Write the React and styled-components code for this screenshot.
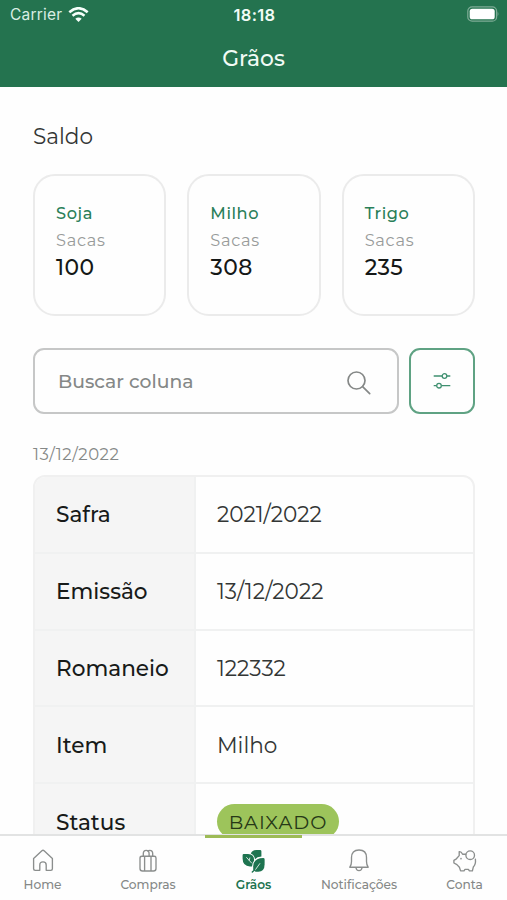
import React from "react";
import styled, { createGlobalStyle } from "styled-components";

const Global = createGlobalStyle`
  *, *::before, *::after { box-sizing: border-box; }
  html, body { margin: 0; padding: 0; background: #fff; overflow: hidden; }
  body { font-family: Montserrat, Inter, "Open Sans", sans-serif; color: #1c1f1e; }
`;

const Screen = styled.div`
  display: flex;
  flex-direction: column;
  width: 507px;
  height: 900px;
  overflow: hidden;
  background: #fefefe;
`;

const Header = styled.header`
  flex: none;
  height: 87px;
  background: #24734f;
  color: #f2fbf6;
`;

const StatusBar = styled.div`
  display: grid;
  grid-template-columns: 1fr auto 1fr;
  align-items: center;
  height: 29px;
  padding: 0 8px 0 10px;
  font-family: Inter, sans-serif;
  line-height: 20px;
`;

const Carrier = styled.div`
  display: flex;
  align-items: center;
  gap: 6px;
  padding-top: 1px;
  font-size: 15.5px;
  letter-spacing: 0.2px;
  color: #d9eee3;

  svg { margin-top: -1px; }
`;

const Clock = styled.div`
  font-size: 16.5px;
  font-weight: 600;
  letter-spacing: 0.3px;
`;

const Battery = styled.div`
  display: flex;
  justify-content: flex-end;
  margin-top: -1px;
`;

const Title = styled.h1`
  margin: 0;
  height: 58px;
  font-size: 21.8px;
  font-weight: 500;
  line-height: 59px;
  text-align: center;
`;

const Content = styled.main`
  flex: 1;
  min-height: 0;
  padding: 0 32px 0 33px;
  overflow: hidden;
`;

const Heading = styled.h2`
  margin: 36px 0 0;
  font-size: 21.6px;
  font-weight: 400;
  line-height: 27px;
  color: #333635;
`;

const Cards = styled.div`
  display: grid;
  grid-template-columns: repeat(3, 1fr);
  gap: 21px;
  margin-top: 24px;
`;

const Card = styled.section`
  height: 142px;
  padding: 24px 21px;
  border: 2px solid #ebebeb;
  border-radius: 22px;
`;

const CardName = styled.div`
  font-size: 16.2px;
  font-weight: 500;
  line-height: 26px;
  letter-spacing: 0.6px;
  color: #2a7f59;
`;

const CardUnit = styled.div`
  font-size: 16.2px;
  line-height: 28px;
  letter-spacing: 0.7px;
  color: #989b9a;
`;

const CardValue = styled.div`
  font-size: 21.8px;
  font-weight: 500;
  line-height: 26px;
  letter-spacing: 0.4px;
  color: #151817;
`;

const SearchRow = styled.div`
  display: flex;
  justify-content: space-between;
  margin-top: 32px;
`;

const SearchBox = styled.div`
  display: flex;
  align-items: center;
  justify-content: space-between;
  width: 366px;
  height: 66px;
  padding: 0 26px 0 23px;
  border: 2px solid #c6c7c7;
  border-radius: 11px;
  font-size: 18.8px;
  font-weight: 500;
  color: #858887;

  svg { margin-top: 4px; }
`;

const FilterButton = styled.button`
  display: flex;
  align-items: center;
  justify-content: center;
  width: 66px;
  height: 66px;
  padding: 0;
  border: 2px solid #5fa283;
  border-radius: 11px;
  background: none;
`;

const DateLabel = styled.div`
  margin-top: 30px;
  font-size: 16.5px;
  line-height: 20px;
  letter-spacing: 0.5px;
  color: #858887;
`;

const Table = styled.div`
  margin-top: 11px;
  border: 2px solid #f0f0f0;
  border-radius: 12px 12px 0 0;
  overflow: hidden;
`;

const Row = styled.div`
  display: grid;
  grid-template-columns: 161px 1fr;
  height: 76.8px;
  border-bottom: 2px solid #f0f1f1;
`;

const Label = styled.div`
  display: flex;
  align-items: center;
  padding-left: 21px;
  border-right: 2px solid #f0f1f1;
  background: #f5f5f5;
  font-size: 21.6px;
  font-weight: 500;
  color: #171a19;
`;

const Value = styled.div`
  display: flex;
  align-items: center;
  padding-left: 21px;
  font-size: 21.6px;
  color: #333635;
`;

const Badge = styled.span`
  display: inline-flex;
  align-items: center;
  justify-content: center;
  width: 122px;
  height: 35px;
  border-radius: 18px;
  background: #9dc45b;
  color: #263817;
  font-size: 19.3px;
  letter-spacing: 1px;
`;

const TabBar = styled.nav`
  flex: none;
  display: grid;
  grid-template-columns: repeat(5, 105.5px);
  justify-content: center;
  height: 66px;
  border-top: 2px solid #e2e3e3;
  background: #fefefe;
`;

const Tab = styled.div`
  position: relative;
  display: flex;
  flex-direction: column;
  align-items: center;
  padding-top: 13px;
  font-size: 12.2px;
  font-weight: ${(p) => (p.$active ? 600 : 500)};
  line-height: 16px;
  color: ${(p) => (p.$active ? "#1e7450" : "#858887")};

  svg { margin-bottom: 4px; }
`;

const Indicator = styled.span`
  position: absolute;
  top: -1px;
  left: 4px;
  width: 97px;
  height: 3px;
  background: #9dbb56;
`;

const Wifi = () => (
  <svg width="21" height="16" viewBox="0 0 21 16" fill="none" stroke="#f6fffa">
    <path d="M1.3 5.2Q10.5-2.7 19.7 5.2" strokeWidth="2.6" />
    <path d="M4.5 8.7Q10.5 3.5 16.5 8.7" strokeWidth="2.5" />
    <path d="M10.5 15L7.3 11.8Q10.5 9.2 13.7 11.8Z" fill="#f6fffa" stroke="none" />
  </svg>
);

const BatteryIcon = () => (
  <svg width="32" height="16" viewBox="0 0 32 16" fill="none">
    <rect x="0.8" y="0.8" width="28.8" height="14.4" rx="4.3" stroke="#7eac96" strokeWidth="1.2" />
    <rect x="2.7" y="2.7" width="25" height="10.6" rx="2.6" fill="#fff" />
    <path d="M30.6 5.8Q32.3 8 30.6 10.2Z" fill="#7eac96" />
  </svg>
);

const SearchIcon = () => (
  <svg width="24" height="24" viewBox="0 0 24 24" fill="none" stroke="#858887" strokeWidth="1.7" strokeLinecap="round">
    <circle cx="9.5" cy="9.5" r="8.5" />
    <path d="M15.6 15.6L22.7 22.6" />
  </svg>
);

const SlidersIcon = () => (
  <svg width="18" height="18" viewBox="0 0 18 18" fill="none" stroke="#3f9070" strokeWidth="1.3">
    <path d="M.7 4H9M14 4H17.3M.7 13.7H3.5M8.5 13.7H17.3" />
    <circle cx="11.5" cy="4" r="2.3" />
    <circle cx="6" cy="13.7" r="2.3" />
  </svg>
);

const TabIcon = ({ children }) => (
  <svg width="24" height="24" viewBox="0 0 24 24" fill="none" stroke="#8b8e8d" strokeWidth="1.35" strokeLinejoin="round" strokeLinecap="round">
    {children}
  </svg>
);

const HomeIcon = () => (
  <TabIcon>
    <path d="M2.6 9.5L10.9 1.8Q12 .8 13.1 1.8L21.4 9.5V19.8Q21.4 21.3 19.9 21.3H15.2V16Q15.2 12.9 12 12.9T8.8 16V21.3H4.1Q2.6 21.3 2.6 19.8Z" />
  </TabIcon>
);

const BagIcon = () => (
  <TabIcon>
    <path d="M6 7.2H18.2Q20 7.2 20 9V19.5Q20 22 17.5 22H6.5Q4 22 4 19.5V9Q4 7.2 6 7.2ZM8.6 7.2V22M15 7.2V22" />
    <path d="M7.3 7V4.8Q7.3 1.4 10.2 1.4T13.1 4.8V7M11.6 2Q12.4 1.4 13.8 1.4Q16.7 1.4 16.7 4.8V7" />
  </TabIcon>
);

const LeavesIcon = () => (
  <TabIcon>
    <g stroke="none" fill="#1e7450">
      <path d="M8.8 4.4Q10.3 .9 14.5 .9H18Q19.4 .9 19.4 2.3V7.5Q15 7.8 13 10.2Q12.6 6.2 8.8 4.4Z" />
      <path d="M1.8 5H6Q12.4 5.4 12.1 11.4Q10.2 13.7 10 17.6H8Q.6 17 .6 9.5V6.2Q.6 5 1.8 5Z" />
      <path d="M21.2 8.9Q22.6 8.9 22.6 10.3V15.4Q22.5 22.5 16.3 22.7H13.6L11.2 20.8V17.2Q11.6 9 21.2 8.9Z" />
    </g>
    <path d="M4.6 8.5L7.2 11.4L7.8 9M7.2 11.4L9.6 14M13.2 21L17.8 14.6" stroke="#e4f1ea" strokeWidth="0.9" />
    <path d="M10.3 23.1L12.8 20.8" stroke="#1e7450" />
  </TabIcon>
);

const BellIcon = () => (
  <TabIcon>
    <path d="M2.8 18.2Q4.5 16 4.5 12.5V8.6Q4.5 1 12 1T19.5 8.6V12.5Q19.5 16 21.2 18.2ZM8.9 18.5Q9.3 21.6 12 21.6T15.1 18.5" />
  </TabIcon>
);

const PiggyIcon = () => (
  <TabIcon>
    <path d="M12.6 5.2H9.6Q8.2 2.3 6.2 2.6V6.6L3.4 9.8L.9 11.3V14L3.9 15.6L6.4 18.2L7.6 21.9H11L12 20.3H15.4L16.4 21.9H19.4L20.3 18.1Q23 15.4 22.4 10.2" />
    <circle cx="17.2" cy="6.2" r="4.3" />
    <circle cx="8" cy="9.6" r=".3" />
  </TabIcon>
);

const cards = [
  { name: "Soja", value: "100" },
  { name: "Milho", value: "308" },
  { name: "Trigo", value: "235" },
];

const rows = [
  { label: "Safra", value: "2021/2022" },
  { label: "Emissão", value: "13/12/2022" },
  { label: "Romaneio", value: "122332" },
  { label: "Item", value: "Milho" },
  { label: "Status", badge: "BAIXADO" },
];

const tabs = [
  { label: "Home", Icon: HomeIcon },
  { label: "Compras", Icon: BagIcon },
  { label: "Grãos", Icon: LeavesIcon, active: true },
  { label: "Notificações", Icon: BellIcon },
  { label: "Conta", Icon: PiggyIcon },
];

export default function App() {
  return (
    <>
      <Global />
      <Screen>
        <Header>
          <StatusBar>
            <Carrier>Carrier <Wifi /></Carrier>
            <Clock>18:18</Clock>
            <Battery><BatteryIcon /></Battery>
          </StatusBar>
          <Title>Grãos</Title>
        </Header>
        <Content>
          <Heading>Saldo</Heading>
          <Cards>
            {cards.map((c) => (
              <Card key={c.name}>
                <CardName>{c.name}</CardName>
                <CardUnit>Sacas</CardUnit>
                <CardValue>{c.value}</CardValue>
              </Card>
            ))}
          </Cards>
          <SearchRow>
            <SearchBox>Buscar coluna <SearchIcon /></SearchBox>
            <FilterButton aria-label="Filtrar"><SlidersIcon /></FilterButton>
          </SearchRow>
          <DateLabel>13/12/2022</DateLabel>
          <Table>
            {rows.map((r) => (
              <Row key={r.label}>
                <Label>{r.label}</Label>
                <Value>{r.badge ? <Badge>{r.badge}</Badge> : r.value}</Value>
              </Row>
            ))}
          </Table>
        </Content>
        <TabBar>
          {tabs.map(({ label, Icon, active }) => (
            <Tab key={label} $active={active}>
              {active && <Indicator />}
              <Icon />
              {label}
            </Tab>
          ))}
        </TabBar>
      </Screen>
    </>
  );
}
